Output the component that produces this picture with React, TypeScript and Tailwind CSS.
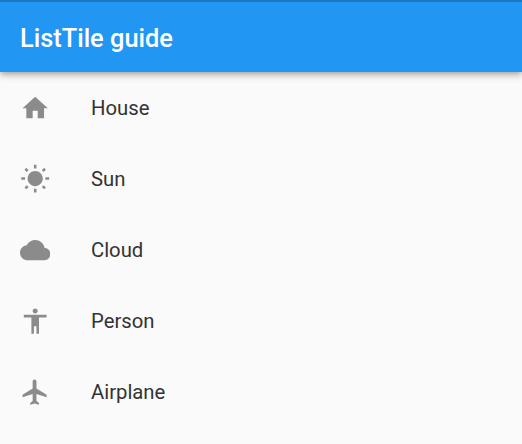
const items = [
  { label: 'House', path: 'M10 20v-6h4v6h5v-8h3L12 3 2 12h3v8z' },
  {
    label: 'Sun',
    path: 'M6.76 4.84l-1.8-1.79-1.41 1.41 1.79 1.79 1.42-1.41zM4 10.5H1v2h3v-2zm9-9.95h-2V3.5h2V.55zm7.45 3.91l-1.41-1.41-1.79 1.79 1.41 1.41 1.79-1.79zm-3.21 13.7l1.79 1.8 1.41-1.41-1.8-1.79-1.4 1.4zM20 10.5v2h3v-2h-3zm-8-5c-3.31 0-6 2.69-6 6s2.69 6 6 6 6-2.69 6-6-2.69-6-6-6zm-1 16.95h2V19.5h-2v2.95zm-7.45-3.91l1.41 1.41 1.79-1.8-1.41-1.41-1.79 1.8z',
  },
  {
    label: 'Cloud',
    path: 'M19.35 10.04C18.67 6.59 15.64 4 12 4 9.11 4 6.6 5.64 5.35 8.04 2.34 8.36 0 10.91 0 14c0 3.31 2.69 6 6 6h13c2.76 0 5-2.24 5-5 0-2.64-2.05-4.78-4.65-4.96z',
  },
  {
    label: 'Person',
    path: 'M12 2c1.1 0 2 .9 2 2s-.9 2-2 2-2-.9-2-2 .9-2 2-2zm9 7h-6v13h-2v-6h-2v6H9V9H3V7h18v2z',
  },
  {
    label: 'Airplane',
    path: 'M21 16v-2l-8-5V3.5c0-.83-.67-1.5-1.5-1.5S10 2.67 10 3.5V9l-8 5v2l8-2.5V19l-2 1.5V22l3.5-1 3.5 1v-1.5L13 19v-5.5l8 2.5z',
  },
];

export default function App() {
  return (
    <div className="flex h-[444px] w-full flex-col overflow-hidden bg-[#fafafa] font-['Roboto',sans-serif]">
      <header className="relative flex h-[72px] shrink-0 items-center border-t-2 border-[#1c78bf] bg-[#2196f3] px-5 pt-[2px] shadow-[0_2px_5px_-1px_rgba(0,0,0,0.2),0_4px_6px_0_rgba(0,0,0,0.14),0_1px_12px_0_rgba(0,0,0,0.1)]">
        <h1 className="text-[25.4px] leading-8 font-medium text-white">ListTile guide</h1>
      </header>
      <ul className="pt-[0.5px]">
        {items.map((item) => (
          <li key={item.label} className="flex h-[71px] items-center pl-[19.8px]">
            <svg viewBox="0 0 24 24" className="size-[30.4px] shrink-0 fill-[#8b8b8b]" aria-hidden="true">
              <path d={item.path} />
            </svg>
            <span className="pl-[40.8px] text-[20.3px] leading-7 text-[#333333]">{item.label}</span>
          </li>
        ))}
      </ul>
    </div>
  );
}
